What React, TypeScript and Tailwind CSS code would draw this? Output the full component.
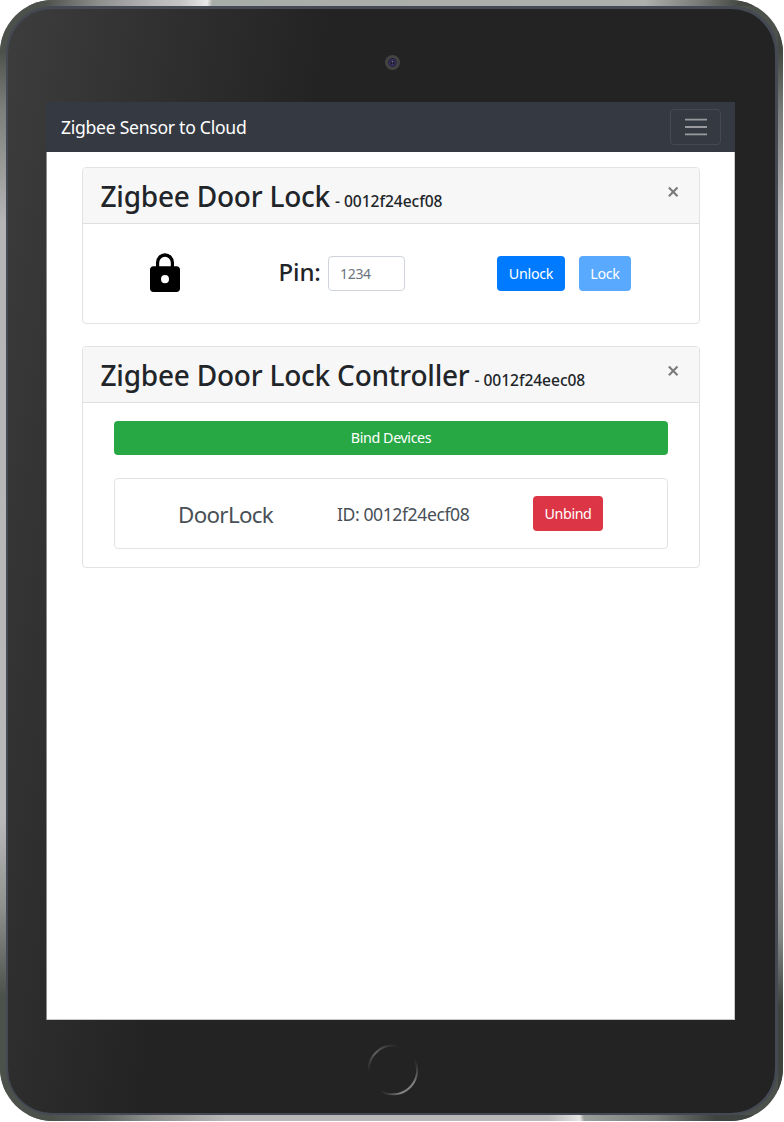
import React from "react";

function CardHeader({ title, id }: { title: string; id: string }) {
  return (
    <div className="flex h-14 items-start justify-between border-b border-[#dfdfdf] bg-[#f7f7f7] pl-[17.5px] pr-5">
      <h2 className="flex items-baseline whitespace-nowrap pt-[7px] leading-[42px] font-medium text-[#212529]">
        <span className="text-[28px] tracking-[-0.22px]">{title}</span>
        <span className="ml-[5px] text-[15.6px] tracking-[-0.06px]">- {id}</span>
      </h2>
      <button aria-label="Close" className="mt-[18px]">
        <svg width="12" height="12" viewBox="0 0 12 12" fill="none" stroke="#7b7b7b" strokeWidth="2.1">
          <path d="M1.9 1.6 10.5 10.2M10.5 1.6 1.9 10.2" />
        </svg>
      </button>
    </div>
  );
}

function Screen() {
  return (
    <div className="ml-[38px] h-[918px] w-[689px] bg-white font-['Noto_Sans',sans-serif] shadow-[inset_1px_0_0_#8c8c8c,inset_-1px_-1px_0_#c8c8c8]">
      <nav className="flex h-[50px] items-center justify-between bg-[#353a42] pl-[15px] pr-[14px]">
        <span className="whitespace-nowrap pt-px text-[17.6px] tracking-[-0.28px] text-white">Zigbee Sensor to Cloud</span>
        <button aria-label="Menu" className="flex h-9 w-[51px] items-center justify-center rounded-[4px] border border-[#464a50]">
          <svg width="22" height="18" viewBox="0 0 22 18" stroke="#999a9d" strokeWidth="1.8">
            <path d="M0 1.6h22M0 9h22M0 16.4h22" />
          </svg>
        </button>
      </nav>
      <main className="pl-9 pr-[35px] pt-[15px]">
        <section className="h-[157px] overflow-hidden rounded-[4px] border border-[#e2e2e2]">
          <CardHeader title="Zigbee Door Lock" id="0012f24ecf08" />
          <div className="flex items-start pt-[32px]">
            <svg className="ml-[67px] mt-[-3px]" width="30" height="39" viewBox="0 0 30 38" preserveAspectRatio="none">
              <path fillRule="evenodd" d="M3.5 13H6V9.2a9 9 0 0 1 18 0V13h2.5A3.3 3.3 0 0 1 30 16.4v18A3.4 3.4 0 0 1 26.5 38h-23A3.4 3.4 0 0 1 0 34.4v-18A3.3 3.3 0 0 1 3.5 13ZM9.2 13h11.6V9.4a5.8 5.8 0 0 0-11.6 0ZM15 21.5a4 4 0 1 0 0 8 4 4 0 0 0 0-8Z" />
            </svg>
            <span className="ml-[98.5px] w-[49.5px] whitespace-nowrap text-[24px] leading-[32px] font-medium tracking-[-0.1px] text-[#212529]">Pin:</span>
            <input className="h-[35px] w-[77px] rounded-[4px] border border-[#ced4da] px-[11px] text-[14px] tracking-[-0.3px] placeholder:text-[#6c757d]" placeholder="1234" />
            <button className="ml-[92px] h-[35px] w-[68px] rounded-[4px] bg-[#007bff] text-[14.3px] tracking-[-0.3px] text-white">Unlock</button>
            <button className="ml-[14px] h-[35px] w-[52px] rounded-[4px] bg-[#59a9ff] text-[14.3px] tracking-[-0.3px] text-white">Lock</button>
          </div>
        </section>
        <section className="mt-[22px] h-[222px] overflow-hidden rounded-[4px] border border-[#e2e2e2]">
          <CardHeader title="Zigbee Door Lock Controller" id="0012f24eec08" />
          <div className="px-[31px] pt-[18px]">
            <button className="block h-[34px] w-full rounded-[4px] bg-[#28a745] text-[14.3px] tracking-[-0.4px] text-white">Bind Devices</button>
            <div className="mt-[23px] flex h-[71px] items-start whitespace-nowrap rounded-[4px] border border-[#e2e2e2] pt-[17px] text-[#495057]">
              <span className="ml-[63px] w-[159px] text-[22.4px] leading-[38px] tracking-[-0.7px]">DoorLock</span>
              <span className="w-[196px] text-[17.6px] leading-[37px] tracking-[-0.42px]">ID: 0012f24ecf08</span>
              <button className="h-[35px] w-[70px] rounded-[4px] bg-[#dc3545] text-[14.3px] tracking-[-0.4px] text-white">Unbind</button>
            </div>
          </div>
        </section>
      </main>
    </div>
  );
}

function Camera() {
  return (
    <svg className="ml-[377px] mt-[46px]" width="15" height="15" viewBox="0 0 15 15">
      <circle cx="7.5" cy="7.5" r="7.5" fill="#434343" />
      <circle cx="7.5" cy="7.5" r="4.2" fill="#1b1a26" />
      <circle cx="7.5" cy="7.5" r="2.9" fill="none" stroke="#3d2f6b" strokeWidth="1.3" />
      <circle cx="7.5" cy="6.6" r="0.9" fill="#77739a" />
      <circle cx="7.5" cy="9" r="0.6" fill="#5a5590" />
    </svg>
  );
}

function HomeButton() {
  return (
    <svg className="ml-[359px] mt-[23.5px]" width="52" height="52" viewBox="0 0 52 52" fill="none" strokeWidth="2">
      <defs>
        <linearGradient id="arcTop" gradientUnits="userSpaceOnUse" x1="2" y1="28" x2="31" y2="2">
          <stop offset="0" stopColor="#232323" />
          <stop offset="0.45" stopColor="#626262" />
          <stop offset="1" stopColor="#232323" />
        </linearGradient>
        <linearGradient id="arcBottom" gradientUnits="userSpaceOnUse" x1="12" y1="46" x2="48" y2="15">
          <stop offset="0" stopColor="#232323" />
          <stop offset="0.3" stopColor="#828282" />
          <stop offset="0.65" stopColor="#828282" />
          <stop offset="1" stopColor="#232323" />
        </linearGradient>
      </defs>
      <path d="M1.7 28A24.3 24.3 0 0 1 31 2.2" stroke="url(#arcTop)" />
      <path d="M48 16A24.3 24.3 0 0 1 12 46" stroke="url(#arcBottom)" />
    </svg>
  );
}

export default function App() {
  return (
    <div className="h-[1122px] w-[784px] overflow-hidden bg-white">
      <div className="flex h-[1121px] w-[783px] flex-col overflow-hidden rounded-[53px] bg-[#4d514c]">
        <div className="h-[6px] shrink-0 bg-[linear-gradient(97deg,#4d514c_45px,#8f918f_100px,#b8b8b8_155px,#c4c4c4_180px,#e8e8e8_206px,#a9ada9_211px,#adb0ac_640px,#777a76_695px,#444842_735px)]" />
        <div className="flex min-h-0 flex-1">
          <div className="w-[6px] shrink-0 bg-[linear-gradient(180deg,#4d514c_45px,#7a7d79_100px,#b5b5b5_215px,#b9b9b9_815px,#8f928f_900px,#4d514c_990px)]" />
          <div className="min-w-0 flex-1 rounded-[47px] bg-[#444954] pl-[2px] pt-[3px] pb-[2px] pr-[3px]">
            <div className="flex h-full w-full flex-col rounded-[44px] bg-[linear-gradient(100deg,#3d3d3d_0px,#2e2e2e_180px,#232323_320px)]">
              <div className="h-[93px] shrink-0">
                <div className="flex">
                  <Camera />
                </div>
              </div>
              <Screen />
              <HomeButton />
            </div>
          </div>
          <div className="w-[5px] shrink-0 bg-[linear-gradient(180deg,#444842_45px,#7a7c79_105px,#b5b5b5_215px,#b5b5b5_815px,#858785_930px,#3f433e_1000px)]" />
        </div>
        <div className="h-[6px] shrink-0 bg-[linear-gradient(83deg,#4d514c_50px,#585a57_90px,#8a8c89_145px,#b8b8b8_225px,#b8b8b8_545px,#e4e4e4_576px,#9a9d99_580px,#7c7f7b_650px,#404440_710px)]" />
      </div>
    </div>
  );
}
